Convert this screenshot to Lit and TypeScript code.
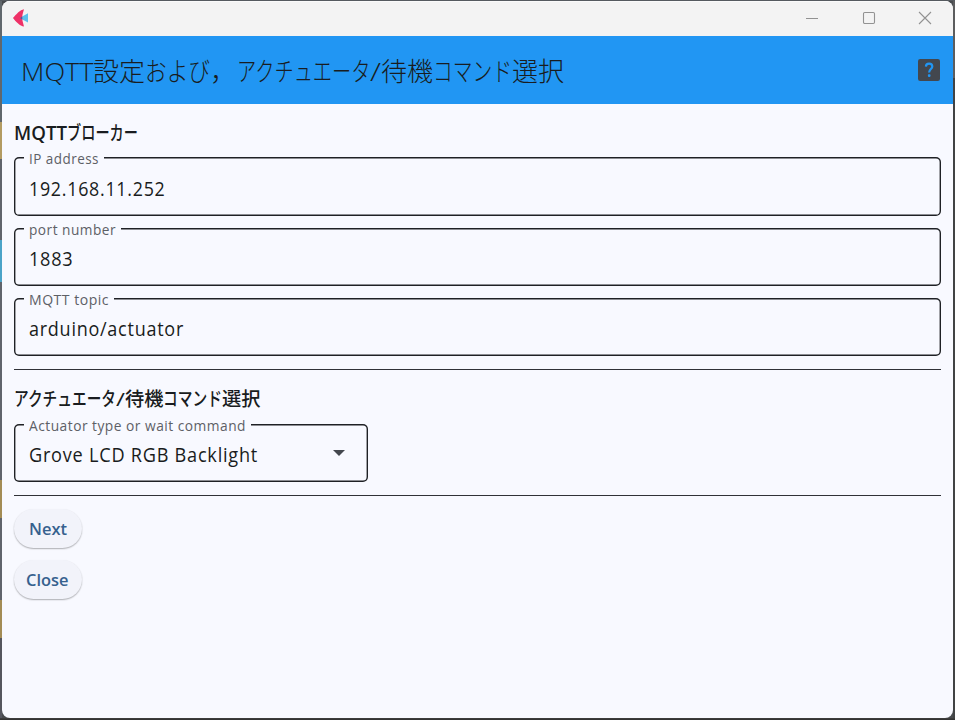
import { LitElement, html, css, svg } from "lit";
import { customElement, property } from "lit/decorators.js";

type Run = [text: string, width: number];

/** A run of text condensed or widened to a fixed advance width. */
@customElement("fit-text")
class FitText extends LitElement {
  static styles = css`
    :host { display: inline-block; white-space: pre; flex: none; }
    .glyphs { display: inline-block; transform-origin: 0 50%; }
  `;
  @property() text = "";
  @property({ type: Number }) width = 0;

  updated() {
    this.style.width = this.width + "px";
    this.fit();
    document.fonts.ready.then(() => this.fit());
  }
  fit() {
    const el = this.renderRoot.querySelector(".glyphs") as HTMLElement;
    el.style.transform = "none";
    const natural = el.getBoundingClientRect().width;
    if (natural > 0) el.style.transform = `scaleX(${this.width / natural})`;
  }
  render() {
    return html`<span class="glyphs">${this.text}</span>`;
  }
}

const scriptOf = (t: string) => (t === "/" ? "slash" : /^[ -~]+$/.test(t) ? "latin" : "kana");

const runs = (list: Run[]) =>
  list.map(([t, w]) => html`<fit-text class=${scriptOf(t)} .text=${t} .width=${w}></fit-text>`);

@customElement("outlined-field")
class OutlinedField extends LitElement {
  static styles = css`
    :host { display: block; position: relative; box-sizing: border-box; height: 58.5px;
      box-shadow: inset 0 0 0 1.4px #1f2125; border-radius: 5px; color: #191c20; }
    .label { position: absolute; left: 10px; top: -9px; height: 20px; line-height: 21px;
      padding: 0 5px; background: #f8f9ff; color: #5d6066; font-size: 14.2px; letter-spacing: .5px; white-space: nowrap; }
    .value { display: flex; align-items: center; justify-content: space-between;
      height: 100%; padding: 4.5px 23px 0 15px; box-sizing: border-box; font-size: 19.4px; line-height: 26px;
      letter-spacing: .8px; font-weight: 400; }
    .arrow { width: 12px; height: 6px; margin-top: -4px; display: block; fill: #43474e; }
  `;
  @property({ attribute: false }) label: Run = ["", 0];
  @property({ attribute: false }) value: Run = ["", 0];
  @property({ type: Boolean }) dropdown = false;

  render() {
    return html`
      <div class="label">${runs([this.label])}</div>
      <div class="value">
        ${runs([this.value])}
        ${this.dropdown
          ? html`<svg class="arrow" viewBox="0 0 12 6">${svg`<path d="M0 0H12L6 6Z"/>`}</svg>`
          : null}
      </div>`;
  }
}

@customElement("app-root")
class AppRoot extends LitElement {
  static styles = css`
    :host { display: block; box-sizing: border-box; width: 955px; height: 720px; padding: 1px 2px 2px;
      overflow: hidden; font-family: "Open Sans", "Noto Sans CJK JP", sans-serif; color: #191c20;
      background:
        linear-gradient(#555a5f, #555a5f) 0 0 / 100% 1px no-repeat,
        linear-gradient(#404040, #303030) 0 100% / 100% 2px no-repeat,
        linear-gradient(#60676c 0 122px, #b39b62 122px 159px, #60646c 159px 240px, #4ba3c8 240px 282px,
          #60646c 282px 480px, #a38c55 480px 518px, #60646c 518px 600px, #a38c55 600px 638px, #55565e 638px)
          0 0 / 2px 100% no-repeat,
        linear-gradient(#5c5d5e 0 78px, #414344 78px) 100% 0 / 2px 100% no-repeat,
        #484b4e; }
    .window { display: flex; flex-direction: column; height: 717px; box-sizing: border-box;
      border-radius: 8px; overflow: hidden; background: #f8f9ff; }
    .titlebar { display: flex; align-items: center; height: 35.4px; flex: none; background: #f3f3f3;
      border-top: 1px solid #fafafa; box-sizing: border-box; padding: 0 21px 0 10px; }
    .logo { width: 16px; height: 18px; margin-top: -2px; }
    .controls { display: flex; gap: 42.5px; margin-left: auto; margin-top: -2px; }
    .controls svg { width: 14px; height: 14px; fill: none; stroke: #929292; stroke-width: 1.1; display: block; }
    .appbar { display: flex; align-items: center; height: 67.6px; flex: none; box-sizing: border-box;
      padding: 2px 13px 0 18.5px; background: #2196f3; }
    .title { display: flex; font-size: 26px; line-height: 36px; }
    .title .latin { font-weight: 360; }
    .title .slash, .title .kana { font-weight: 300; }
    .help { width: 22px; height: 22px; margin-left: auto; margin-top: -2px; display: block; }
    .content { display: flex; flex-direction: column; padding: 16px 12px 0 11.5px; }
    .heading { display: flex; font-size: 19px; font-weight: 500; line-height: 26px; height: 26px; }
    .heading .latin { font-weight: 560; }
    .heading .slash { font-weight: 400; }
    .fields { display: grid; gap: 11.8px; margin-top: 11.4px; }
    .rule { height: 1.5px; background: #303237; margin: 12.5px 0 16px; }
    .select { width: 354.5px; margin-top: 11.5px; }
    .rule.last { margin-bottom: 12.4px; }
    .actions { display: flex; flex-direction: column; gap: 12px; align-items: flex-start; }
    .button { width: 68px; height: 39px; padding: 0; border: 0; border-radius: 20px; background: #f2f3fa;
      box-shadow: 0 1px 1.5px rgba(0,0,0,.26), 0 1px 2px rgba(0,0,0,.06); color: #36618e;
      font: 560 16.5px/40px "Open Sans", sans-serif; }
  `;

  render() {
    return html`
      <div class="window">
        <div class="titlebar">
          <svg class="logo" viewBox="0 0 16 18">
            <path d="M7.5 9L16 4.200V13.400Z" fill="#5bc0eb"/>
            <path d="M12 .3C8 1 4.500 5 1 9C4 13 8 17 12 17.600C10.800 13 10.200 11 10.200 9S10.800 4 12 .3Z" fill="#ee3167"/>
            <path d="M8.500 8.800L10.200 7.600V10.600L8.500 9.600Z" fill="#3d61a8"/>
          </svg>
          <div class="controls">
            <svg viewBox="0 0 14 14"><path d="M1 7.500H13"/></svg>
            <svg viewBox="0 0 14 14"><rect x="1.500" y="1.500" width="11" height="11" rx="1.200"/></svg>
            <svg viewBox="0 0 14 14"><path d="M1 1L13 13M13 1L1 13"/></svg>
          </div>
        </div>
        <div class="appbar">
          <div class="title">${runs([
            ["MQTT", 72.5], ["設定", 52], ["および", 65], ["，", 26.5], ["アクチュエータ", 133.5],
            ["/", 11], ["待機", 52], ["コマンド", 79], ["選択", 52],
          ])}</div>
          <svg class="help" viewBox="0 0 22 22">
            <rect width="22" height="22" rx="2.200" fill="#43474e"/>
            <path d="M7.900 7.600C8 3.600 14.200 3.600 14.300 7.500C14.300 10 11.100 10.300 11.100 13.600" fill="none" stroke="#2196f3" stroke-width="2.200"/>
            <rect x="9.900" y="15.300" width="2.600" height="2.600" rx=".8" fill="#2196f3"/>
          </svg>
        </div>
        <div class="content">
          <div class="heading">${runs([["MQTT", 53], ["ブローカー", 71]])}</div>
          <div class="fields">
            <outlined-field .label=${["IP address", 70]} .value=${["192.168.11.252", 136.500]}></outlined-field>
            <outlined-field .label=${["port number", 87]} .value=${["1883", 44.500]}></outlined-field>
            <outlined-field .label=${["MQTT topic", 80]} .value=${["arduino/actuator", 155]}></outlined-field>
          </div>
          <div class="rule"></div>
          <div class="heading">${runs([
            ["アクチュエータ", 102], ["/", 9], ["待機", 38.500], ["コマンド", 59], ["選択", 38.500],
          ])}</div>
          <outlined-field class="select" dropdown
            .label=${["Actuator type or wait command", 217]}
            .value=${["Grove LCD RGB Backlight", 229]}></outlined-field>
          <div class="rule last"></div>
          <div class="actions">
            <button class="button">${runs([["Next", 38]])}</button>
            <button class="button">${runs([["Close", 42.500]])}</button>
          </div>
        </div>
      </div>`;
  }
}
